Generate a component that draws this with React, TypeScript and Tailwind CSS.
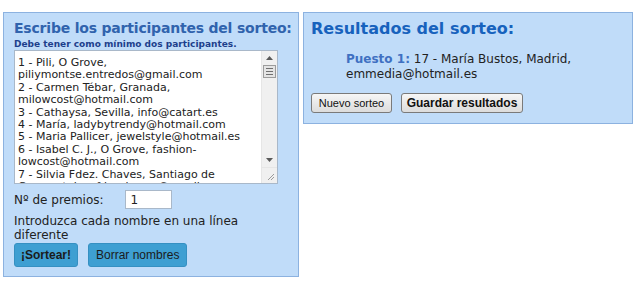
import React from 'react';

const participants = [
  '1 - Pili, O Grove,',
  'piliymontse.entredos@gmail.com',
  '2 - Carmen Tébar, Granada,',
  'milowcost@hotmail.com',
  '3 - Cathaysa, Sevilla, info@catart.es',
  '4 - María, ladybytrendy@hotmail.com',
  '5 - Maria Pallicer, jewelstyle@hotmail.es',
  '6 - Isabel C. J., O Grove, fashion-',
  'lowcost@hotmail.com',
  '7 - Silvia Fdez. Chaves, Santiago de',
  'Compostela, sfdezchaves@gmail.com',
];

function FakeScrollbar() {
  return (
    <div className="w-[16px] bg-[#f0f0f0] border-l border-[#e6e6e6] flex flex-col items-center">
      <div className="h-[14px] flex items-center justify-center">
        <svg width="7" height="4" viewBox="0 0 7 4">
          <path d="M0 4 L3.5 0 L7 4 Z" fill="#5a5a5a" />
        </svg>
      </div>
      <div className="w-[13px] h-[13px] bg-[#e4e4e4] border border-[#9c9c9c] flex flex-col items-center justify-center gap-[2px]">
        <div className="w-[7px] h-px bg-[#6f6f6f]" />
        <div className="w-[7px] h-px bg-[#6f6f6f]" />
        <div className="w-[7px] h-px bg-[#6f6f6f]" />
      </div>
      <div className="flex-1" />
      <div className="h-[14px] flex items-center justify-center">
        <svg width="7" height="4" viewBox="0 0 7 4">
          <path d="M0 0 L3.5 4 L7 0 Z" fill="#5a5a5a" />
        </svg>
      </div>
      <div className="h-[16px] w-full bg-[#f0f0f0] border-t border-[#e6e6e6] flex items-end justify-end p-[2px]">
        <svg width="8" height="8" viewBox="0 0 8 8">
          <path d="M7 1 L1 7 M7 4 L4 7" stroke="#9a9a9a" strokeWidth="1" />
        </svg>
      </div>
    </div>
  );
}

export default function App() {
  return (
    <div className="w-[640px] h-[284px] bg-white flex items-start gap-[4px] pl-[3px] pt-[12px] font-['DejaVu_Sans',Verdana,sans-serif]">
      {/* participantes */}
      <div className="w-[296px] h-[265px] bg-[#c0dcf9] border border-[#8cb2e0] pl-[10px] pt-[5px]">
        <h2 className="text-[14px] leading-[20px] font-bold text-[#3063ad] tracking-[-0.2px]">
          Escribe los participantes del sorteo:
        </h2>
        <p className="text-[9px] leading-[12px] font-bold text-[#1d3f8c]">
          Debe tener como mínimo dos participantes.
        </p>
        <div className="w-[264px] h-[134px] bg-white border border-[#a9b8c9] flex overflow-hidden">
          <div className="flex-1 pl-[3px] pt-[6px] text-[11px] leading-[12.4px] text-[#222] overflow-hidden">
            {participants.map((line) => (
              <div key={line} className="whitespace-nowrap">{line}</div>
            ))}
          </div>
          <FakeScrollbar />
        </div>
        <div className="mt-[6px] flex items-center text-[12px] text-[#222]">
          <span>Nº de premios:</span>
          <input
            readOnly
            value="1"
            className="ml-[21px] w-[47px] h-[19px] bg-white border border-[#a9b8c9] px-[5px] text-[12px] leading-[17px] outline-none"
          />
        </div>
        <p className="mt-[5px] text-[12px] leading-[14px] text-[#222] w-[250px]">
          Introduzca cada nombre en una línea diferente
        </p>
        <div className="mt-[1px] flex gap-[10px] font-['Liberation_Sans',Arial,sans-serif] text-[12px] text-[#1b1b1b]">
          <button className="h-[24px] px-[6px] rounded-[3px] bg-[#3e9fd2] border border-[#3590c2] font-bold">
            ¡Sortear!
          </button>
          <button className="h-[24px] px-[7px] rounded-[3px] bg-[#3e9fd2] border border-[#3590c2]">
            Borrar nombres
          </button>
        </div>
      </div>

      {/* resultados */}
      <div className="w-[330px] h-[112px] bg-[#c0dcf9] border border-[#8cb2e0] pl-[7px] pt-[5px]">
        <h2 className="text-[16px] leading-[22px] font-bold text-[#1762bd]">Resultados del sorteo:</h2>
        <p className="mt-[12px] ml-[35px] text-[12px] leading-[15px] text-[#222] w-[270px]">
          <span className="font-bold text-[#3f70c2]">Puesto 1:</span> 17 - María Bustos, Madrid, emmedia@hotmail.es
        </p>
        <div className="mt-[11px] flex gap-[9px] font-['Liberation_Sans',Arial,sans-serif] text-[11px] text-[#111]">
          <button className="h-[20px] w-[81px] rounded-[3px] border border-[#7a7a7a] bg-gradient-to-b from-[#f6f6f6] to-[#dcdcdc]">
            Nuevo sorteo
          </button>
          <button className="h-[20px] w-[122px] rounded-[3px] border border-[#7a7a7a] bg-gradient-to-b from-[#f6f6f6] to-[#dcdcdc] font-bold text-[12px]">
            Guardar resultados
          </button>
        </div>
      </div>
    </div>
  );
}
